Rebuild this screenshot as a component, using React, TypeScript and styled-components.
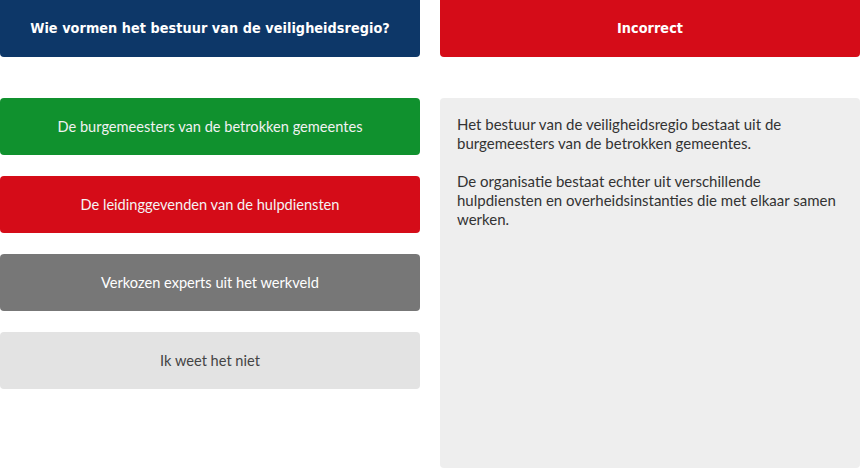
import React from "react";
import styled, { createGlobalStyle } from "styled-components";

type Answer = {
  label: string;
  state: "correct" | "wrong" | "neutral" | "skip";
};

const answers: Answer[] = [
  { label: "De burgemeesters van de betrokken gemeentes", state: "correct" },
  { label: "De leidinggevenden van de hulpdiensten", state: "wrong" },
  { label: "Verkozen experts uit het werkveld", state: "neutral" },
  { label: "Ik weet het niet", state: "skip" },
];

const colors = {
  correct: { bg: "#10912e", fg: "#f2f2f2" },
  wrong: { bg: "#d50c18", fg: "#f4f4f4" },
  neutral: { bg: "#777777", fg: "#ffffff" },
  skip: { bg: "#e3e3e3", fg: "#444444" },
};

const App: React.FC = () => {
  return (
    <>
      <GlobalStyle />
      <Page>
        <Column>
          <Heading $bg="#0d3768">Wie vormen het bestuur van de veiligheidsregio?</Heading>
          <AnswerList>
            {answers.map((a) => (
              <AnswerButton key={a.label} $state={a.state}>
                {a.label}
              </AnswerButton>
            ))}
          </AnswerList>
        </Column>
        <Column>
          <Heading $bg="#d50c18">Incorrect</Heading>
          <Feedback>
            <p>
              Het bestuur van de veiligheidsregio bestaat uit de burgemeesters
              van de betrokken gemeentes.
            </p>
            <p>
              De organisatie bestaat echter uit verschillende hulpdiensten en
              overheidsinstanties die met elkaar samen werken.
            </p>
          </Feedback>
        </Column>
      </Page>
    </>
  );
};

export default App;

const GlobalStyle = createGlobalStyle`
  html, body {
    margin: 0;
    padding: 0;
    background: #ffffff;
  }
  body {
    font-family: Lato, "Liberation Sans", Arial, sans-serif;
  }
`;

const Page = styled.div`
  display: grid;
  grid-template-columns: 420px 420px;
  column-gap: 20px;
  width: 860px;
  height: 468px;
  overflow: hidden;
`;

const Column = styled.div`
  display: flex;
  flex-direction: column;
  gap: 41px;
  min-height: 0;
`;

const Heading = styled.h2<{ $bg: string }>`
  margin: 0;
  height: 57px;
  display: flex;
  align-items: center;
  justify-content: center;
  background: ${(p) => p.$bg};
  color: #ffffff;
  border-radius: 0 0 4px 4px;
  font-family: "DejaVu Sans Condensed", "DejaVu Sans", sans-serif;
  font-weight: bold;
  font-size: 14.3px;
  letter-spacing: 0.05px;
  padding-bottom: 1px;
  box-sizing: border-box;
`;

const AnswerList = styled.div`
  display: flex;
  flex-direction: column;
  gap: 21px;
`;

const AnswerButton = styled.div<{ $state: Answer["state"] }>`
  height: 57px;
  display: flex;
  align-items: center;
  justify-content: center;
  border-radius: 4px;
  background: ${(p) => colors[p.$state].bg};
  color: ${(p) => colors[p.$state].fg};
  font-size: 14.6px;
`;

const Feedback = styled.div`
  flex: 1;
  background: #eeeeee;
  border-radius: 4px;
  padding: 17px 17px 0 17px;
  color: #333333;
  font-size: 15px;
  line-height: 19px;

  p {
    margin: 0 0 19px 0;
  }
`;
